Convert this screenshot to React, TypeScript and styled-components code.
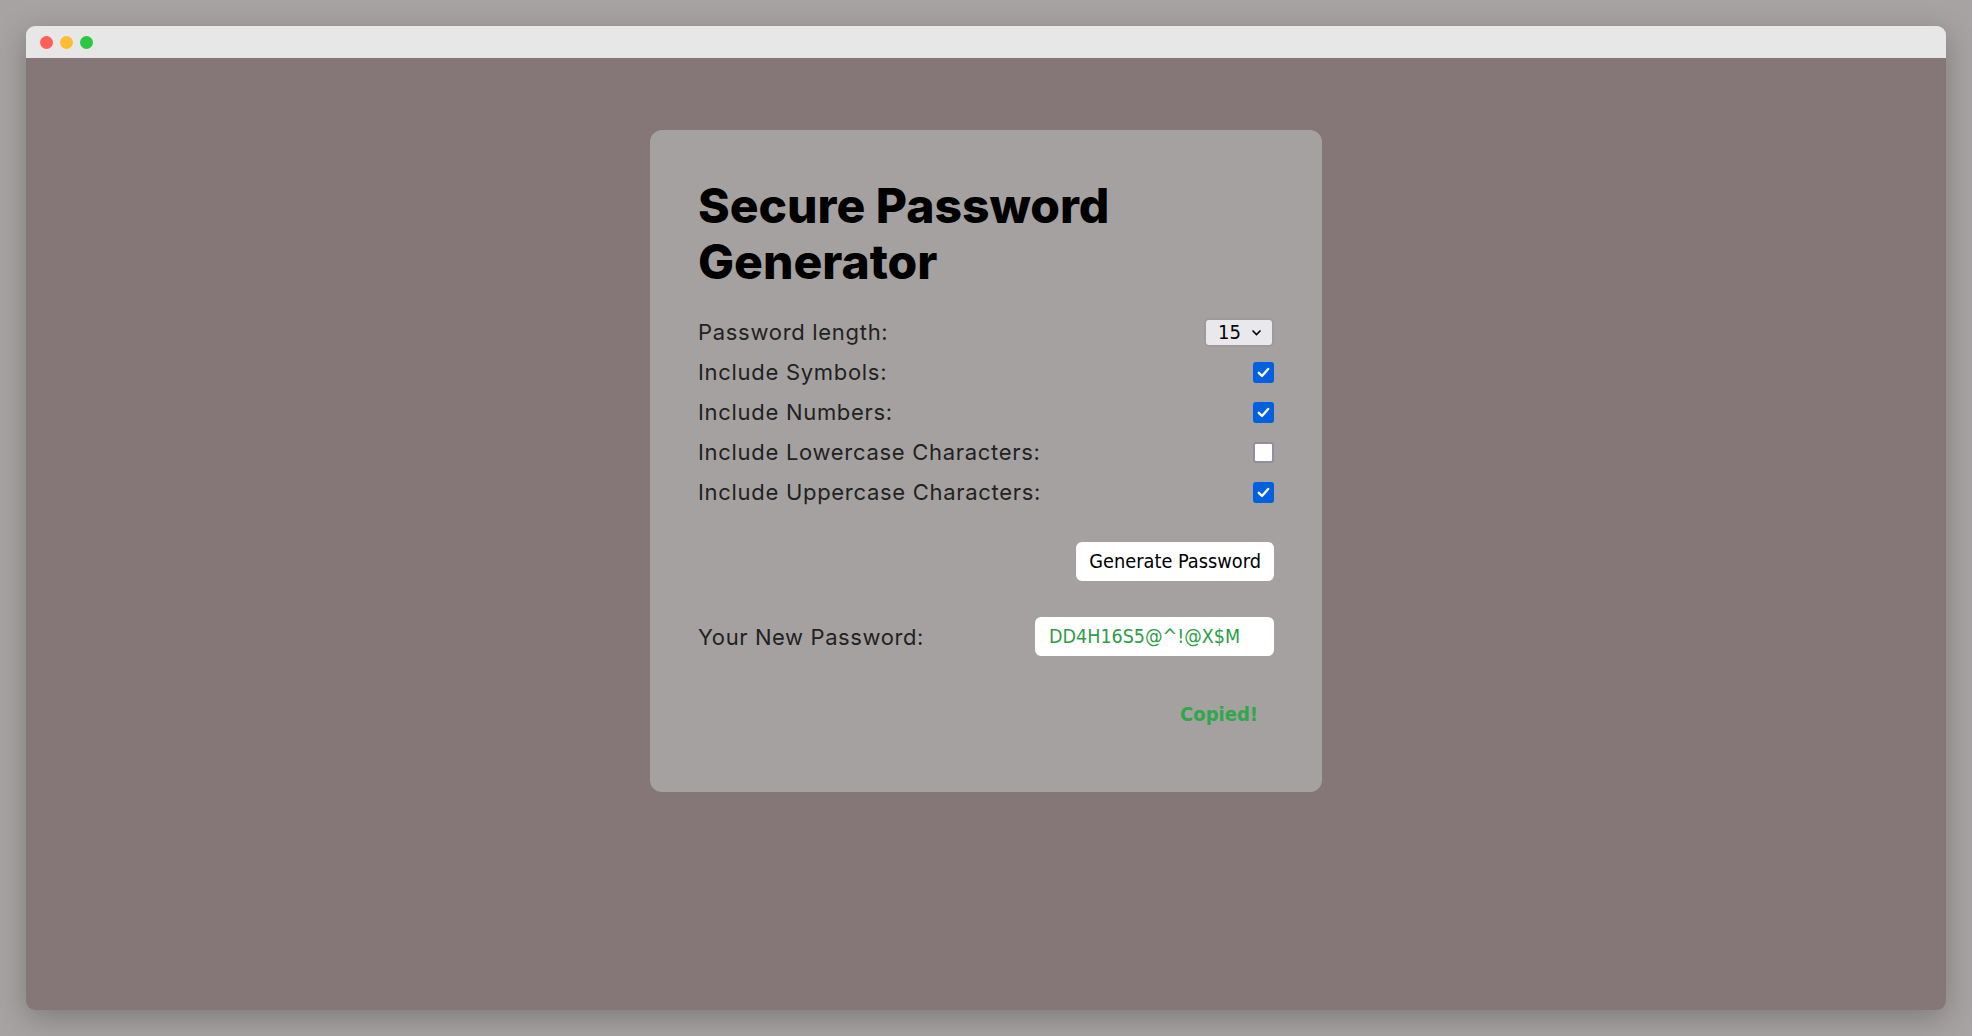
import styled, { createGlobalStyle } from "styled-components";

const GlobalStyle = createGlobalStyle`
  html, body {
    margin: 0;
    padding: 0;
    background: #a7a3a2;
  }
  * {
    box-sizing: border-box;
  }
`;

const uiFont = `"DejaVu Sans Condensed", "DejaVu Sans", sans-serif`;
const textFont = `Inter, "Liberation Sans", sans-serif`;

const Screen = styled.div`
  width: 1972px;
  height: 1036px;
  padding: 26px;
  background: #a7a3a2;
`;

const Window = styled.div`
  display: flex;
  flex-direction: column;
  height: 984px;
  border-radius: 9px;
  overflow: hidden;
  box-shadow: 0 8px 30px rgba(0, 0, 0, 0.25);
`;

const TitleBar = styled.div`
  display: flex;
  align-items: center;
  gap: 7px;
  height: 32px;
  padding-left: 14px;
  background: #e8e7e7;
`;

const Light = styled.span<{ color: string }>`
  width: 13px;
  height: 13px;
  border-radius: 50%;
  background: ${(props) => props.color};
`;

const Content = styled.main`
  flex: 1;
  display: flex;
  justify-content: center;
  align-items: flex-start;
  padding-top: 72px;
  background: #857777;
`;

const Card = styled.section`
  width: 672px;
  padding: 48px 48px 66px;
  border-radius: 12px;
  background: #a5a1a0;
`;

const Title = styled.h1`
  margin: 0 0 22px;
  font-family: ${textFont};
  font-weight: 800;
  font-size: 48px;
  line-height: 56px;
  color: #000;
`;

const Row = styled.label`
  display: flex;
  align-items: center;
  justify-content: space-between;
  height: 40px;
  font-family: ${textFont};
  font-size: 22px;
  letter-spacing: 0.7px;
  color: #222;
`;

const Select = styled.div`
  display: flex;
  align-items: center;
  justify-content: space-between;
  width: 70px;
  height: 29px;
  padding: 0 10px 0 12px;
  border: 2px solid #9e9a99;
  border-radius: 5px;
  background: #e9e9ed;
  font-family: ${uiFont};
  font-size: 20px;
  letter-spacing: 0;
  color: #000;
`;

const Box = styled.span<{ checked: boolean }>`
  display: flex;
  align-items: center;
  justify-content: center;
  width: 21px;
  height: 21px;
  border-radius: 3px;
  background: ${(props) => (props.checked ? "#0060df" : "#fff")};
  border: ${(props) => (props.checked ? "none" : "2px solid #8f8f9d")};
`;

const Actions = styled.div`
  display: flex;
  justify-content: flex-end;
  margin-top: 30px;
`;

const Button = styled.button`
  height: 39px;
  padding: 0 13px;
  border: none;
  border-radius: 6px;
  background: #fff;
  font-family: ${uiFont};
  font-size: 19.8px;
  color: #000;
`;

const OutputRow = styled.div`
  display: flex;
  align-items: center;
  justify-content: space-between;
  margin-top: 36px;
  font-family: ${textFont};
  font-size: 22px;
  letter-spacing: 0.6px;
  color: #222;
`;

const Output = styled.div`
  display: flex;
  align-items: center;
  width: 239px;
  height: 39px;
  padding: 0 14px;
  border-radius: 6px;
  background: #fff;
  font-family: ${uiFont};
  font-size: 19.5px;
  letter-spacing: 0;
  color: #2e9d45;
`;

const Copied = styled.div`
  margin-top: 46px;
  padding-right: 16px;
  text-align: right;
  font-family: ${uiFont};
  font-weight: bold;
  font-size: 20px;
  color: #2ea84a;
`;

function Check() {
  return (
    <svg width="13" height="11" viewBox="0 0 13 11">
      <path d="M1.8 5.8 L5 9 L11.2 2" fill="none" stroke="#fff" strokeWidth="2.4" strokeLinecap="round" strokeLinejoin="round" />
    </svg>
  );
}

const options = [
  { label: "Include Symbols:", checked: true },
  { label: "Include Numbers:", checked: true },
  { label: "Include Lowercase Characters:", checked: false },
  { label: "Include Uppercase Characters:", checked: true },
];

function App() {
  return (
    <>
      <GlobalStyle />
      <Screen>
        <Window>
          <TitleBar>
            <Light color="#ff5f57" />
            <Light color="#febc2e" />
            <Light color="#28c840" />
          </TitleBar>
          <Content>
            <Card>
              <Title>
                Secure Password
                <br />
                Generator
              </Title>
              <Row>
                Password length:
                <Select>
                  15
                  <svg width="11" height="7" viewBox="0 0 11 7">
                    <path d="M1.5 1.5 L5.5 5.5 L9.5 1.5" fill="none" stroke="#000" strokeWidth="1.6" />
                  </svg>
                </Select>
              </Row>
              {options.map((o) => (
                <Row key={o.label}>
                  {o.label}
                  <Box checked={o.checked}>{o.checked && <Check />}</Box>
                </Row>
              ))}
              <Actions>
                <Button>Generate Password</Button>
              </Actions>
              <OutputRow>
                Your New Password:
                <Output>DD4H16S5@^!@X$M</Output>
              </OutputRow>
              <Copied>Copied!</Copied>
            </Card>
          </Content>
        </Window>
      </Screen>
    </>
  );
}

export default App;
